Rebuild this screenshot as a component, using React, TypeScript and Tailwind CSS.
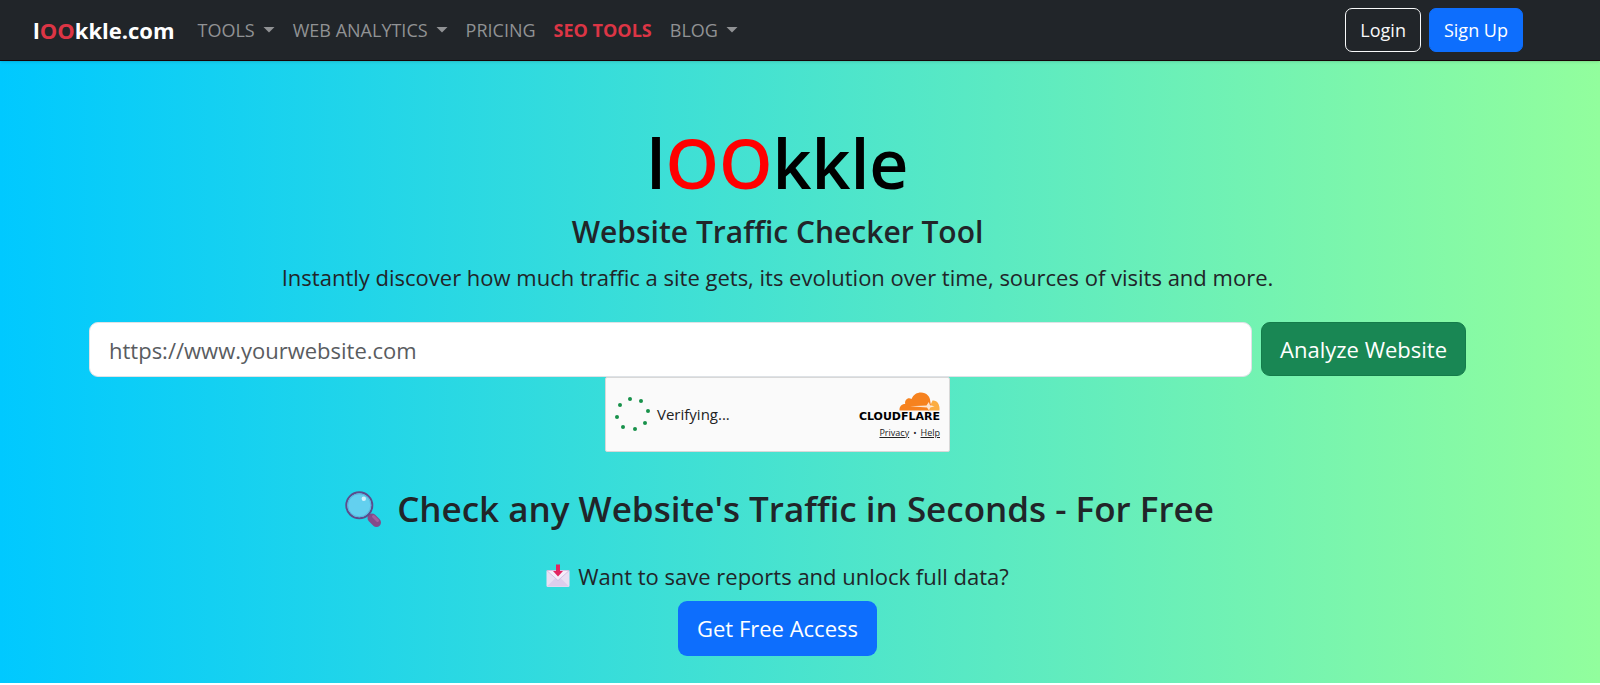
import { useState } from 'react';

interface NavItem {
  label: string;
  hasMenu?: boolean;
  highlight?: boolean;
}

const NAV_ITEMS: NavItem[] = [
  { label: 'TOOLS', hasMenu: true },
  { label: 'WEB ANALYTICS', hasMenu: true },
  { label: 'PRICING' },
  { label: 'SEO TOOLS', highlight: true },
  { label: 'BLOG', hasMenu: true },
];

// Dots of the loading ring, centred on 18,18
const SPINNER_DOTS = [
  [15, 2],
  [26, 4],
  [33, 14],
  [30, 26],
  [20, 32],
  [8, 30],
  [2, 20],
  [5, 8],
];

function Caret() {
  return (
    <svg className="w-3 h-2" viewBox="0 0 12 8" aria-hidden="true">
      <path d="M0.5 1h11L6 6.500z" fill="currentColor" />
    </svg>
  );
}

function CloudLogo() {
  return (
    <svg className="w-[41px] h-[19px]" viewBox="0 0 41 19" aria-hidden="true">
      <path d="M29 18.500 33.500 8.500C38 8 41 12 40.500 18.500z" fill="#fbad41" />
      <path
        d="M.5 18.500C.3 14.500 2.500 12 6.200 12 5.300 8 9 5 12.500 7 14.500 2.500 18 .5 22 .5c5.500 0 9.300 4 9.300 9l.7 4-2 5z"
        fill="#f6821f"
      />
      <path d="M11 14.200 27.500 13.500l2.300-3.500 1.200 3.200 4.500 1-4.200 1.200-1.300 3-2-2.900z" fill="#fff" opacity="0.8" />
    </svg>
  );
}

function MagnifierIcon() {
  return (
    <svg className="w-9 h-[37px] shrink-0" viewBox="0 0 36 37" aria-hidden="true">
      <path d="M23 23 27 27" stroke="#55487f" strokeWidth="3" />
      <path d="m27 27 4.500 4.500" stroke="#844b8a" strokeWidth="9" strokeLinecap="round" />
      <path d="m28.500 25.500 4 4" stroke="#a2609f" strokeWidth="3" strokeLinecap="round" />
      <circle cx="14.300" cy="14.300" r="13" fill="#63d0ef" stroke="#5c4c8c" strokeWidth="2" />
      <circle cx="14.300" cy="14.300" r="11.500" fill="none" stroke="#58b4dd" strokeWidth="1" />
      <circle cx="18.800" cy="7.800" r="2.200" fill="#d3f3fd" />
    </svg>
  );
}

function InboxIcon() {
  return (
    <svg className="w-6 h-6 shrink-0" viewBox="0 0 24 24" aria-hidden="true">
      <rect x="0.500" y="6" width="23" height="17" rx="1.500" fill="#e9dff3" />
      <path d="M.8 22.500 9.500 14h5l8.700 8.500z" fill="#ddcdec" />
      <path d="M.8 6.500 12 16.500 23.200 6.500z" fill="#f4edf9" stroke="#c7b3dc" strokeWidth="0.700" />
      <path d="M10 .5h4V7h3L12 12.500 7 7H10z" fill="#e22561" />
    </svg>
  );
}

function Navbar() {
  return (
    <header className="relative bg-[#212529] border-b border-[#160408] shadow-sm">
      <nav className="flex items-center pl-[33px] pr-[77px] py-2">
        <a href="#" className="text-[22px] leading-8 font-bold text-white mr-[14px]">
          l<span className="text-[#dc3545]">OO</span>kkle.com
        </a>
        <ul className="flex items-center">
          {NAV_ITEMS.map(({ label, hasMenu, highlight }) => (
            <li key={label}>
              <a
                href="#"
                className={`flex items-center gap-2 px-[9px] text-[18px] leading-7 ${
                  highlight ? 'font-bold text-[#dc3545]' : 'text-[#909294]'
                }`}
              >
                {label}
                {hasMenu && <Caret />}
              </a>
            </li>
          ))}
        </ul>
        <div className="flex items-center gap-2 ml-auto">
          <button className="h-11 px-[14px] text-[18px] text-[#f8f9fa] border border-[#f8f9fa] rounded-[7px] cursor-pointer">
            Login
          </button>
          <button className="h-11 px-[14px] text-[18px] text-white bg-[#0d6efd] border border-[#0d6efd] rounded-[7px] cursor-pointer">
            Sign Up
          </button>
        </div>
      </nav>
    </header>
  );
}

function VerifyWidget() {
  return (
    <div className="w-[345px] h-[75px] flex items-center justify-between px-[9px] bg-[#fafafa] border border-[#d8d8d8] rounded-xs text-black">
      <div className="flex items-center gap-[6px]">
        <svg className="w-9 h-9" viewBox="0 0 36 36" aria-hidden="true">
          {SPINNER_DOTS.map(([cx, cy]) => (
            <circle key={`${cx}-${cy}`} cx={cx} cy={cy} r="2" fill="#17914a" />
          ))}
        </svg>
        <span className="text-[15px] text-[#232323]">Verifying...</span>
      </div>
      <div className="flex flex-col items-end pt-0.5">
        <CloudLogo />
        <span className="text-[11px] leading-3 font-bold font-['DejaVu_Sans',sans-serif]">CLOUDFLARE</span>
        <div className="mt-1 flex gap-1 text-[9px] leading-3 text-[#232323]">
          <a href="#" className="underline">Privacy</a>
          <span>•</span>
          <a href="#" className="underline">Help</a>
        </div>
      </div>
    </div>
  );
}

export default function App() {
  const [url, setUrl] = useState('');

  return (
    <div className="font-['Open_Sans','Noto_Sans',sans-serif] text-[#212529] bg-white">
      <Navbar />

      <main className="bg-linear-to-r/srgb from-[#00c9ff] to-[#92fe9d] pl-[89px] pr-[134px] pt-[60px] pb-[27px] flex flex-col items-center text-center">
        <h1 className="text-[68px] leading-[84px] font-semibold text-black">
          l<span className="text-[#ff0000]">OO</span>kkle
        </h1>
        <h2 className="mt-2 text-[30px] leading-[38px] font-semibold">Website Traffic Checker Tool</h2>
        <p className="mt-[9px] text-[22px] leading-[34px]">
          Instantly discover how much traffic a site gets, its evolution over time, sources of visits and more.
        </p>

        {/* URL form */}
        <form className="mt-7 w-full flex gap-[9px]" onSubmit={(e) => e.preventDefault()}>
          <input
            type="url"
            aria-label="Website URL"
            placeholder="https://www.yourwebsite.com"
            value={url}
            onChange={(e) => setUrl(e.target.value)}
            className="flex-1 min-w-0 h-[55px] px-[19px] text-[22px] bg-white border border-[#dee2e6] rounded-[9px] placeholder:text-[#595c5f]"
          />
          <button
            type="submit"
            className="h-[54px] px-[18px] text-[22px] text-white bg-[#198754] border border-[#147c4b] rounded-[9px] cursor-pointer"
          >
            Analyze Website
          </button>
        </form>
        <VerifyWidget />

        {/* Sign up prompt */}
        <h2 className="mt-[35px] pl-1 flex items-center gap-4 text-[35px] leading-[44px] font-semibold">
          <MagnifierIcon />
          Check any Website's Traffic in Seconds - For Free
        </h2>
        <p className="mt-7 flex items-center gap-2 text-[22px] leading-[34px]">
          <InboxIcon />
          Want to save reports and unlock full data?
        </p>
        <button className="mt-2 h-[55px] px-[19px] text-[22px] text-white bg-[#0d6efd] rounded-[9px] cursor-pointer">
          Get Free Access
        </button>
      </main>
    </div>
  );
}
